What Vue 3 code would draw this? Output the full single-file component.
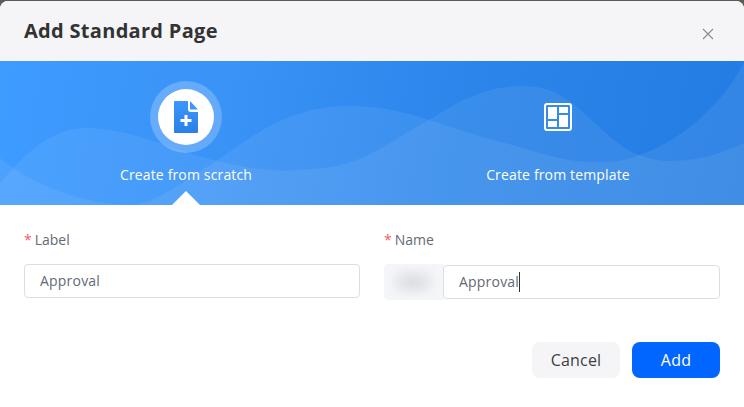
<script setup>
</script>

<template>
  <div class="page">
    <div class="dialog">
      <header class="head">
        <h1 class="title">Add Standard Page</h1>
        <svg class="close" width="12" height="12" viewBox="0 0 12 12" aria-label="Close">
          <path d="M1 1L11 11M11 1L1 11" stroke="#8a8a96" stroke-width="1.1" fill="none" />
        </svg>
      </header>

      <section class="banner">
        <svg class="waves" viewBox="0 0 744 144" preserveAspectRatio="none" aria-hidden="true">
          <path d="M0 122C15 105 45 67 85 67C130 67 170 88 213 99C250 108 275 111 300 109C330 107 350 104 372 92C395 80 410 69 429 59C455 42 485 25 519 25C545 25 555 30 572 42C595 60 615 85 639 94C650 98 660 100 672 100C700 100 725 91 744 82V144H0Z" fill="#fff" fill-opacity="0.07" />
          <path d="M0 97C25 118 70 142 130 144C150 144 170 130 213 102C250 78 285 45 350 45C380 45 405 51 429 59C455 67 480 76 505 82C535 90 560 100 589 101C610 102 625 100 639 94C670 85 720 50 744 1V144H0Z" fill="#fff" fill-opacity="0.07" />
        </svg>

        <div class="tab">
          <div class="halo">
            <div class="disc">
              <svg width="24" height="32" viewBox="0 0 24 32">
                <defs>
                  <linearGradient id="fileFill" x1="0" y1="0" x2="0" y2="1">
                    <stop offset="0" stop-color="#3d97fb" />
                    <stop offset="1" stop-color="#2a80e8" />
                  </linearGradient>
                </defs>
                <path d="M1 0H14V8C14 10 15 11 17 11H24V31C24 31.6 23.6 32 23 32H1C.4 32 0 31.6 0 31V1C0 .4 .4 0 1 0Z" fill="url(#fileFill)" />
                <path d="M16 0L24 8.5H16Z" fill="#3d97fb" />
                <path d="M12 14V25M6.5 19.5H17.5" stroke="#fff" stroke-width="3" fill="none" />
              </svg>
            </div>
          </div>
          <span class="tab-label">Create from scratch</span>
          <span class="pointer"></span>
        </div>

        <div class="tab">
          <div class="plain-icon">
            <svg width="28" height="28" viewBox="0 0 28 28">
              <rect x="1" y="1" width="26" height="26" rx="2" fill="none" stroke="#fff" stroke-width="2" />
              <path d="M4 4H13V16H4ZM15 4H24V10H15ZM15 12H24V24H15ZM4 18H13V24H4Z" fill="#fff" />
            </svg>
          </div>
          <span class="tab-label">Create from template</span>
        </div>
      </section>

      <form class="form" @submit.prevent>
        <div class="fields">
          <div class="field">
            <label class="label"><i class="req">*</i>Label</label>
            <div class="input first">Approval</div>
          </div>
          <div class="field">
            <label class="label"><i class="req">*</i>Name</label>
            <div class="group">
              <div class="prefix"><span class="smudge"></span></div>
              <div class="input second">Approval<span class="caret"></span></div>
            </div>
          </div>
        </div>
        <div class="actions">
          <button type="button" class="btn cancel">Cancel</button>
          <button type="button" class="btn add">Add</button>
        </div>
      </form>
    </div>
  </div>
</template>

<style scoped>
.page {
  width: 744px;
  height: 407px;
  overflow: hidden;
  background: #5c5a58;
  padding-top: 1px;
  box-sizing: border-box;
  font-family: "Open Sans", "Noto Sans", sans-serif;
}
.dialog {
  height: 406px;
  background: #fff;
  border-radius: 8px 8px 0 0;
  overflow: hidden;
}
.head {
  height: 60px;
  background: #f5f5f7;
  display: flex;
  align-items: center;
  justify-content: space-between;
  padding: 0 30px 0 24px;
}
.title {
  margin: 0;
  font-size: 20px;
  line-height: 60px;
  font-weight: 700;
  letter-spacing: 0.3px;
  color: #333;
}
.close {
  margin-top: 5px;
}
.banner {
  position: relative;
  height: 144px;
  display: grid;
  grid-template-columns: 372px 372px;
  background: linear-gradient(100deg, #3e9bff 0%, #3a93f7 30%, #2b85ea 62%, #237ce3 100%);
}
.waves {
  position: absolute;
  inset: 0;
  width: 100%;
  height: 100%;
}
.tab {
  position: relative;
  display: flex;
  flex-direction: column;
  align-items: center;
  padding-top: 20px;
  color: #fff;
}
.halo {
  width: 72px;
  height: 72px;
  border-radius: 50%;
  background: rgba(255, 255, 255, 0.22);
  display: flex;
  align-items: center;
  justify-content: center;
}
.disc {
  width: 56px;
  height: 56px;
  border-radius: 50%;
  background: #fff;
  display: flex;
  align-items: center;
  justify-content: center;
}
.plain-icon {
  height: 72px;
  display: flex;
  align-items: center;
  justify-content: center;
}
.tab-label {
  margin-top: 12px;
  font-size: 14px;
  line-height: 20px;
  letter-spacing: 0.15px;
  position: relative;
}
.pointer {
  position: absolute;
  left: 50%;
  bottom: 0;
  margin-left: -14px;
  border-left: 14px solid transparent;
  border-right: 14px solid transparent;
  border-bottom: 14px solid #fff;
}
.form {
  padding: 0 24px;
}
.fields {
  display: grid;
  grid-template-columns: 336px 336px;
  column-gap: 24px;
  padding-top: 25px;
}
.label {
  display: block;
  font-size: 14px;
  line-height: 20px;
  color: #646a73;
}
.req {
  font-style: normal;
  color: #f5586a;
  margin-right: 3px;
}
.input {
  box-sizing: border-box;
  height: 34px;
  border: 1px solid #dcdde6;
  border-radius: 4px;
  background: #fff;
  padding-left: 15px;
  font-size: 14px;
  line-height: 32px;
  letter-spacing: 0.2px;
  color: #646a73;
}
.first {
  margin-top: 14px;
}
.group {
  display: flex;
  margin-top: 14px;
}
.prefix {
  box-sizing: border-box;
  width: 60px;
  height: 36px;
  background: #f5f6f9;
  border-radius: 4px 0 0 4px;
  display: flex;
  align-items: center;
  padding-left: 8px;
}
.smudge {
  width: 42px;
  height: 26px;
  background: radial-gradient(ellipse at 50% 50%, #dedfe2 15%, #f2f3f6 85%);
  filter: blur(3px);
}
.second {
  flex: 1;
  margin-top: 1px;
  margin-left: -1px;
}
.caret {
  display: inline-block;
  width: 1px;
  height: 20px;
  background: #333;
  vertical-align: -5px;
}
.actions {
  display: flex;
  justify-content: flex-end;
  gap: 12px;
  margin-top: 42px;
}
.btn {
  width: 88px;
  height: 36px;
  border: 0;
  border-radius: 8px;
  font-family: inherit;
  font-size: 16px;
  letter-spacing: 0.2px;
}
.cancel {
  background: #f5f5f7;
  color: #3c3f45;
}
.add {
  background: #0066ff;
  color: #fff;
}
</style>
